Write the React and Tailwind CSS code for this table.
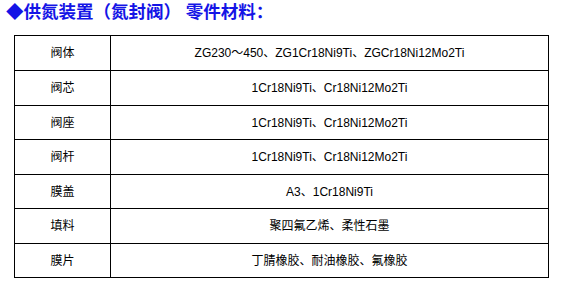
import React from 'react';

const rows = [
  { part: '阀体', material: 'ZG230～450、ZG1Cr18Ni9Ti、ZGCr18Ni12Mo2Ti', h: 'h-[35px]' },
  { part: '阀芯', material: '1Cr18Ni9Ti、Cr18Ni12Mo2Ti', h: 'h-[35px]' },
  { part: '阀座', material: '1Cr18Ni9Ti、Cr18Ni12Mo2Ti', h: 'h-[34px]' },
  { part: '阀杆', material: '1Cr18Ni9Ti、Cr18Ni12Mo2Ti', h: 'h-[35px]' },
  { part: '膜盖', material: 'A3、1Cr18Ni9Ti', h: 'h-[34px]' },
  { part: '填料', material: '聚四氟乙烯、柔性石墨', h: 'h-[35px]' },
  { part: '膜片', material: '丁腈橡胶、耐油橡胶、氟橡胶', h: 'h-[34px]' },
];

const font = 'font-["Liberation_Sans","Noto_Sans_CJK_SC",sans-serif]';

export default function App() {
  return (
    <div className={`w-[570px] h-[288px] bg-white ${font}`}>
      {/* heading */}
      <div className="h-[35px] pl-[6px] pt-[1px]">
        <h1 className="text-[17.5px] leading-[22px] font-bold text-[#1414e6]">
          ◆供氮装置（氮封阀） 零件材料：
        </h1>
      </div>

      {/* materials table */}
      <table className="ml-[14px] w-[535px] border-collapse border border-black text-[12px] text-black">
        <tbody>
          {rows.map((r) => (
            <tr key={r.part} className={r.h}>
              <td className="w-[96px] border border-black text-center p-0">{r.part}</td>
              <td className="border border-black text-center p-0">{r.material}</td>
            </tr>
          ))}
        </tbody>
      </table>
    </div>
  );
}
